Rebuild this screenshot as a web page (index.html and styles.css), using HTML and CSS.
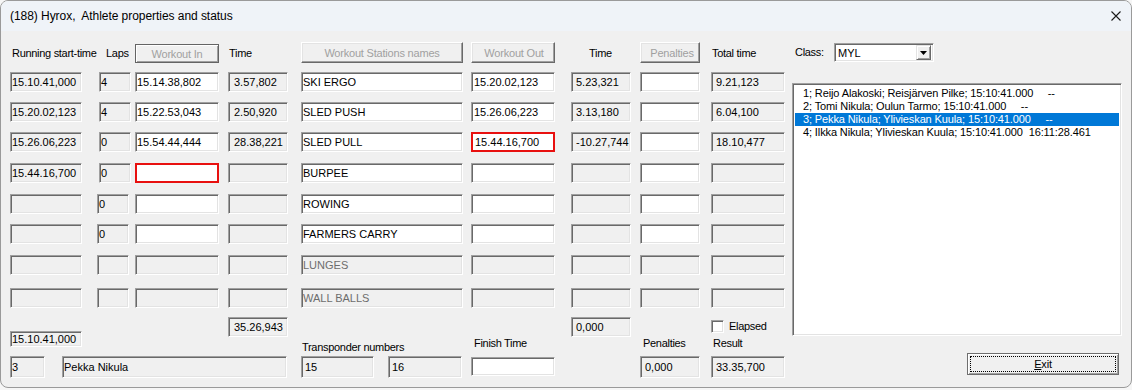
FILE: index.html
```html
<!DOCTYPE html>
<html lang="en">
<head>
  <meta charset="UTF-8" />
  <title>(188) Hyrox - Athlete properties and status</title>
  <link rel="stylesheet" href="styles.css">
</head>
<body>
  <div class="window">
    <div class="titlebar">
      <span class="title">(188) Hyrox,  Athlete properties and status</span>
      <svg class="close" width="10" height="10" viewBox="0 0 10 10"><path d="M0.5 0.5 L9.5 9.5 M9.5 0.5 L0.5 9.5" stroke="#1a1a1a" stroke-width="1.1" fill="none"/></svg>
    </div>

    <div class="dialog">
      <div class="grid">
        <!-- header row -->
        <span class="lbl hd hd-start">Running start-time</span>
        <span class="lbl hd hd-laps">Laps</span>
        <span class="btn btn-focus c-in">Workout In</span>
        <span class="lbl hd hd-time">Time</span>
        <span class="btn c-name">Workout Stations names</span>
        <span class="btn c-out">Workout Out</span>
        <span class="lbl hd hd-time2">Time</span>
        <span class="btn c-pen">Penalties</span>
        <span class="lbl hd hd-total">Total time</span>
        <div class="class-row">
          <span class="lbl class-lbl">Class:</span>
          <div class="combo">
            <span class="combo-text">MYL</span>
            <span class="combo-btn"><svg width="7" height="4" viewBox="0 0 7 4"><polygon points="0,0 7,0 3.5,4" fill="#000"/></svg></span>
          </div>
        </div>

        <div class="listbox">
          <div class="item">1; Reijo Alakoski; Reisjärven Pilke; 15:10:41.000     --</div>
          <div class="item">2; Tomi Nikula; Oulun Tarmo; 15:10:41.000     --</div>
          <div class="item sel">3; Pekka Nikula; Ylivieskan Kuula; 15:10:41.000     --</div>
          <div class="item">4; Ilkka Nikula; Ylivieskan Kuula; 15:10:41.000  16:11:28.461</div>
        </div>

        <!-- station rows -->
        <span class="ed ro c-start">15.10.41,000</span>
        <span class="ed ro c-laps">4</span>
        <span class="ed wh c-in">15.14.38,802</span>
        <span class="ed ro c-time">3.57,802</span>
        <span class="ed wh c-name">SKI ERGO</span>
        <span class="ed wh c-out">15.20.02,123</span>
        <span class="ed ro c-time2">5.23,321</span>
        <span class="ed wh c-pen"></span>
        <span class="ed ro c-total">9.21,123</span>

        <span class="ed ro c-start">15.20.02,123</span>
        <span class="ed ro c-laps">4</span>
        <span class="ed wh c-in">15.22.53,043</span>
        <span class="ed ro c-time">2.50,920</span>
        <span class="ed wh c-name">SLED PUSH</span>
        <span class="ed wh c-out">15.26.06,223</span>
        <span class="ed ro c-time2">3.13,180</span>
        <span class="ed wh c-pen"></span>
        <span class="ed ro c-total">6.04,100</span>

        <span class="ed ro c-start">15.26.06,223</span>
        <span class="ed ro c-laps">0</span>
        <span class="ed wh c-in">15.54.44,444</span>
        <span class="ed ro c-time">28.38,221</span>
        <span class="ed wh c-name">SLED PULL</span>
        <span class="ed wh err c-out">15.44.16,700</span>
        <span class="ed ro c-time2">-10.27,744</span>
        <span class="ed wh c-pen"></span>
        <span class="ed ro c-total">18.10,477</span>

        <span class="ed ro c-start">15.44.16,700</span>
        <span class="ed ro c-laps">0</span>
        <span class="ed wh err c-in"></span>
        <span class="ed ro c-time"></span>
        <span class="ed wh c-name">BURPEE</span>
        <span class="ed wh c-out"></span>
        <span class="ed ro c-time2"></span>
        <span class="ed wh c-pen"></span>
        <span class="ed ro c-total"></span>

        <span class="ed ro c-start"></span>
        <span class="ed ro c-laps lo">0</span>
        <span class="ed wh c-in"></span>
        <span class="ed ro c-time"></span>
        <span class="ed wh c-name">ROWING</span>
        <span class="ed wh c-out"></span>
        <span class="ed ro c-time2"></span>
        <span class="ed wh c-pen"></span>
        <span class="ed ro c-total"></span>

        <span class="ed ro c-start"></span>
        <span class="ed ro c-laps lo">0</span>
        <span class="ed wh c-in"></span>
        <span class="ed ro c-time"></span>
        <span class="ed wh c-name">FARMERS CARRY</span>
        <span class="ed wh c-out"></span>
        <span class="ed ro c-time2"></span>
        <span class="ed wh c-pen"></span>
        <span class="ed ro c-total"></span>

        <span class="ed ro c-start"></span>
        <span class="ed ro c-laps lo"></span>
        <span class="ed ro c-in"></span>
        <span class="ed ro c-time"></span>
        <span class="ed ro dis c-name">LUNGES</span>
        <span class="ed ro c-out"></span>
        <span class="ed ro c-time2"></span>
        <span class="ed ro c-pen"></span>
        <span class="ed ro c-total"></span>

        <span class="ed ro c-start"></span>
        <span class="ed ro c-laps lo"></span>
        <span class="ed ro c-in"></span>
        <span class="ed ro c-time"></span>
        <span class="ed ro dis c-name">WALL BALLS</span>
        <span class="ed ro c-out"></span>
        <span class="ed ro c-time2"></span>
        <span class="ed ro c-pen"></span>
        <span class="ed ro c-total"></span>

        <!-- totals and athlete -->
        <span class="ed ro c-start sum-start">15.10.41,000</span>
        <span class="ed ro c-time sum-time">35.26,943</span>
        <span class="ed ro c-time2 sum-time2">0,000</span>
        <label class="elapsed"><span class="check"></span><span class="lbl">Elapsed</span></label>

        <span class="lbl lbl-transp">Transponder numbers</span>
        <span class="lbl lbl-finish">Finish Time</span>
        <span class="lbl lbl-pen">Penalties</span>
        <span class="lbl lbl-result">Result</span>

        <div class="athlete">
          <span class="ed ro big bib">3</span>
          <span class="ed ro big name">Pekka Nikula</span>
        </div>
        <div class="transp">
          <span class="ed ro big tr1">15</span>
          <span class="ed ro big tr2">16</span>
        </div>
        <span class="ed wh c-out finish"></span>
        <span class="ed ro big c-pen res-pen">0,000</span>
        <span class="ed ro big c-total result">33.35,700</span>
        <span class="exit"><span class="focus-rect"><u>E</u>xit</span></span>
      </div>
    </div>
  </div>
</body>
</html>
```

FILE: styles.css
```css
:root {
  --face: #f0f0f0;
  --shadow: #a0a0a0;
  --dark: #696969;
  --light: #e3e3e3;
  --sel: #0078d7;
}
* { box-sizing: border-box; }
html { background: #f6f6f6; }
body {
  margin: 0;
  font-family: "Liberation Sans", Arial, sans-serif;
  font-size: 11px;
  color: #000;
}
.window {
  width: 1132px;
  height: 388px;
  background: var(--face);
  border: 1px solid #9a9a9a;
  border-radius: 8px;
  overflow: hidden;
}
.titlebar {
  height: 30px;
  background: #eff3f8;
  display: flex;
  align-items: center;
  justify-content: space-between;
  padding: 0 10px 0 9px;
}
.title {
  font-size: 12px;
  white-space: pre;
  letter-spacing: -0.05px;
  color: #000;
}
.close { display: block; }

/* dialog body */
.dialog { padding: 10px 0 0 9px; }
.grid {
  display: grid;
  grid-template-columns: 89px 36px 93px 73px 170px 100px 69px 71px 81px 330px;
  grid-template-rows: 31px 30px 30px 31px 31px 30px 31px 33px 29px 20px 19px 22px;
  align-items: start;
}
.lbl {
  line-height: 13px;
  letter-spacing: -0.3px;
  white-space: nowrap;
}
.hd { margin-top: 6px; }
.hd-start { padding-left: 2px; }
.hd-laps { padding-left: 7px; }
.hd-time { padding-left: 1px; }
.hd-time2 { padding-left: 18px; }
.hd-total { padding-left: 1px; }

/* buttons */
.btn {
  height: 21px;
  margin-top: 1px;
  display: flex;
  align-items: center;
  justify-content: center;
  color: #a0a0a0;
  letter-spacing: -0.2px;
  background: var(--face);
  border: 1px solid;
  border-color: #fff var(--dark) var(--dark) #fff;
  box-shadow: inset -1px -1px 0 var(--shadow), inset 1px 1px 0 var(--light);
  white-space: nowrap;
}
.btn-focus {
  height: 19px;
  margin-top: 3px;
  border-color: #646464;
  box-shadow: inset 1px 1px 0 #fff, inset -1px -1px 0 var(--shadow);
}

/* class combo */
.class-row {
  display: flex;
  align-items: center;
  height: 19px;
  margin-top: 2px;
}
.class-lbl { width: 42px; padding-left: 3px; }
.combo {
  width: 100px;
  height: 19px;
  background: #fff;
  display: flex;
  align-items: center;
  justify-content: space-between;
  padding: 0 2px 0 3px;
  border: 1px solid;
  border-color: var(--shadow) #fff #fff var(--shadow);
  box-shadow: inset 1px 1px 0 var(--dark), inset -1px -1px 0 var(--light);
}
.combo-btn {
  width: 15px;
  height: 15px;
  display: flex;
  align-items: center;
  justify-content: center;
  background: var(--face);
  border: 1px solid;
  border-color: var(--light) var(--dark) var(--dark) var(--light);
  box-shadow: inset 1px 1px 0 #fff, inset -1px -1px 0 var(--shadow);
}

/* list of athletes */
.listbox {
  grid-column: 10;
  grid-row: 2 / 11;
  margin-top: 11px;
  height: 253px;
  background: #fff;
  padding: 3px 2px;
  border: 1px solid;
  border-color: var(--shadow) #fff #fff var(--shadow);
  box-shadow: inset 1px 1px 0 var(--dark), inset -1px -1px 0 var(--light);
}
.item {
  height: 13px;
  line-height: 13px;
  padding-left: 8px;
  letter-spacing: -0.12px;
  white-space: pre;
}
.item.sel { background: var(--sel); color: #fff; }

/* edit fields */
.ed {
  height: 20px;
  display: flex;
  align-items: center;
  padding-left: 1px;
  white-space: nowrap;
  overflow: hidden;
  border: 1px solid;
  border-color: var(--shadow) #fff #fff var(--shadow);
  box-shadow: inset 1px 1px 0 var(--dark), inset -1px -1px 0 var(--light);
}
.ed.ro { background: var(--face); }
.ed.wh { background: #fff; }
.ed.dis { color: #6d6d6d; }
.ed.err {
  border: 2px solid #e8100f;
  box-shadow: none;
}
.ed.big { height: 22px; }

.c-start { width: 72px; }
.c-laps { width: 32px; }
.c-laps.lo { margin-left: -2px; }
.c-in { width: 84px; }
.c-time { width: 60px; padding-left: 5px; }
.c-name { width: 162px; }
.c-out { width: 84px; padding-left: 2px; }
.c-time2 { width: 60px; padding-left: 4px; }
.c-pen { width: 60px; padding-left: 4px; }
.c-total { width: 74px; padding-left: 4px; }

/* bottom part */
.sum-start { grid-area: 10 / 1; margin-top: 14px; height: 16px; }
.sum-time { grid-area: 10 / 4; }
.sum-time2 { grid-area: 10 / 7; }
.elapsed {
  grid-area: 10 / 9;
  margin-top: 3px;
  display: flex;
  align-items: center;
  gap: 5px;
}
.check {
  width: 13px;
  height: 13px;
  background: #fff;
  border: 1px solid;
  border-color: var(--shadow) #fff #fff var(--shadow);
  box-shadow: inset 1px 1px 0 var(--dark), inset -1px -1px 0 var(--light);
}
.lbl-transp { grid-area: 11 / 5; margin-top: 4px; padding-left: 1px; }
.lbl-finish { grid-area: 11 / 6; padding-left: 3px; }
.lbl-pen { grid-area: 11 / 8; padding-left: 3px; }
.lbl-result { grid-area: 11 / 9; padding-left: 2px; }

.athlete {
  grid-column: 1 / 5;
  grid-row: 12;
  display: flex;
  gap: 17px;
}
.bib { width: 35px; }
.name { width: 225px; padding-left: 1px; }
.transp {
  grid-area: 12 / 5;
  display: flex;
  gap: 14px;
}
.tr1 { width: 73px; padding-left: 3px; }
.tr2 { width: 74px; padding-left: 3px; }
.finish { grid-area: 12 / 6; height: 19px; margin-top: 1px; }
.res-pen { grid-area: 12 / 8; }
.result { grid-area: 12 / 9; }

.exit {
  grid-area: 12 / 10;
  justify-self: end;
  margin: -3px 3px 0 0;
  width: 152px;
  height: 22px;
  display: flex;
  padding: 2px;
  background: var(--face);
  border: 1px solid #6e6e6e;
  box-shadow: inset 1px 1px 0 #fff, inset -1px -1px 0 var(--shadow);
}
.focus-rect {
  flex: 1;
  display: flex;
  align-items: center;
  justify-content: center;
  border: 1px dotted #000;
  letter-spacing: -0.2px;
}
```
